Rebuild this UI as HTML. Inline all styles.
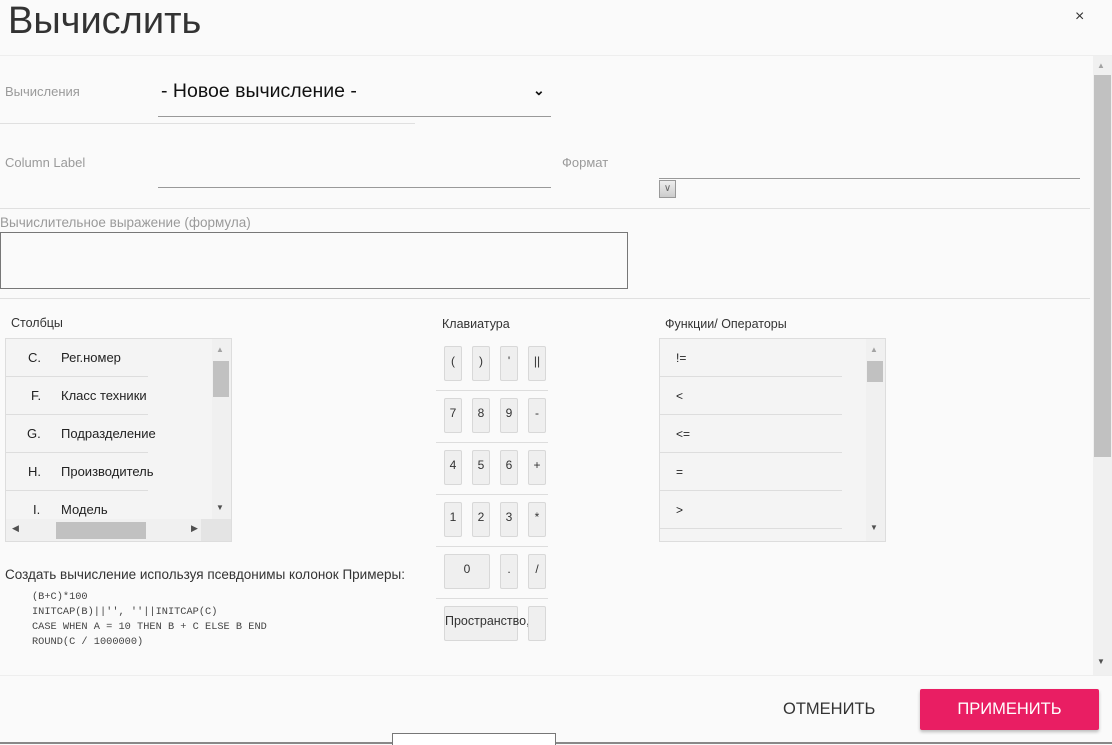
<!DOCTYPE html>
<html><head><meta charset="utf-8"><style>
body{margin:0;width:1112px;height:744px;background:#fafafa;font-family:"Liberation Sans",sans-serif;position:relative;overflow:hidden;color:#333}
.a{position:absolute}
.lbl{color:#9a9a9a;font-size:13px}
.hl{position:absolute;height:1px;background:#e0e0e0}
.k{position:absolute;width:16px;height:33px;background:#efefef;border:1px solid #d8d8d8;border-radius:2px;font-size:12px;text-align:center;line-height:28px;color:#333}
.ks{position:absolute;left:436px;width:112px;height:1px;background:#ddd}
.row{position:absolute;height:37px;border-bottom:1px solid #ddd;font-size:13px;color:#222}
.mono{font-family:"Liberation Mono",monospace;font-size:10.3px;color:#444;line-height:15px}
</style></head><body>
<div class="a" style="left:8px;top:-1px;font-size:38px;color:#333;line-height:44px">Вычислить</div>
<div class="a" style="left:1075px;top:8px;font-size:16px;color:#333">×</div>
<div class="hl" style="left:0;top:55px;width:1112px;background:#eee"></div>

<div class="a lbl" style="left:5px;top:84px">Вычисления</div>
<div class="a" style="left:161px;top:80px;font-size:19.5px;color:#111">- Новое вычисление -</div>
<div class="a" style="left:533px;top:82px;font-size:14px;color:#111;font-weight:bold">⌄</div>
<div class="hl" style="left:158px;top:116px;width:393px;background:#999"></div>
<div class="hl" style="left:0;top:123px;width:415px"></div>

<div class="a lbl" style="left:5px;top:155px">Column Label</div>
<div class="hl" style="left:158px;top:187px;width:393px;background:#999"></div>
<div class="a lbl" style="left:562px;top:155px">Формат</div>
<div class="hl" style="left:659px;top:178px;width:421px;background:#999"></div>
<div class="a" style="left:659px;top:180px;width:15px;height:16px;border:1px solid #999;background:linear-gradient(#eee,#ccc);font-size:10px;color:#666;text-align:center;line-height:16px">∨</div>
<div class="hl" style="left:0;top:208px;width:1090px"></div>

<div class="a lbl" style="left:0;top:215px;font-size:13.5px">Вычислительное выражение (формулa)</div>
<div class="a" style="left:0;top:232px;width:626px;height:55px;border:1px solid #777;background:#fafafa"></div>
<div class="hl" style="left:0;top:298px;width:1090px"></div>

<div class="a" style="left:11px;top:316px;font-size:12.5px">Столбцы</div>
<div class="a" style="left:5px;top:338px;width:225px;height:202px;border:1px solid #ddd;background:#f4f4f4;overflow:hidden">
 <div class="row" style="left:0;top:0;width:142px"><span class="a" style="left:22px;top:11px">C.</span><span class="a" style="left:55px;top:11px">Рег.номер</span></div>
 <div class="row" style="left:0;top:38px;width:142px"><span class="a" style="left:25px;top:11px">F.</span><span class="a" style="left:55px;top:11px;white-space:nowrap">Класс техники</span></div>
 <div class="row" style="left:0;top:76px;width:142px"><span class="a" style="left:21px;top:11px">G.</span><span class="a" style="left:55px;top:11px;white-space:nowrap">Подразделение</span></div>
 <div class="row" style="left:0;top:114px;width:142px"><span class="a" style="left:22px;top:11px">H.</span><span class="a" style="left:55px;top:11px;white-space:nowrap">Производитель</span></div>
 <div class="a" style="left:0;top:152px;width:142px;font-size:13px;color:#222"><span class="a" style="left:27px;top:11px">I.</span><span class="a" style="left:55px;top:11px">Модель</span></div>
 <div class="a" style="left:206px;top:0;width:19px;height:180px;background:#f0f0f0"></div>
 <div class="a" style="left:207px;top:22px;width:16px;height:36px;background:#c1c1c1"></div>
 <div class="a" style="left:210px;top:6px;font-size:8px;color:#a3a3a3">▲</div>
 <div class="a" style="left:210px;top:164px;font-size:8px;color:#505050">▼</div>
 <div class="a" style="left:0;top:180px;width:206px;height:22px;background:#f0f0f0"></div>
 <div class="a" style="left:50px;top:183px;width:90px;height:17px;background:#c1c1c1"></div>
 <div class="a" style="left:6px;top:184px;font-size:9px;color:#505050">◀</div>
 <div class="a" style="left:185px;top:184px;font-size:9px;color:#505050">▶</div>
 <div class="a" style="left:195px;top:180px;width:30px;height:22px;background:#e4e4e4"></div>
</div>

<div class="a" style="left:5px;top:567px;font-size:13.5px">Создать вычисление используя псевдонимы колонок Примеры:</div>
<div class="a mono" style="left:32px;top:590px;white-space:pre">(B+C)*100
INITCAP(B)||'', ''||INITCAP(C)
CASE WHEN A = 10 THEN B + C ELSE B END
ROUND(C / 1000000)</div>

<div class="a" style="left:442px;top:317px;font-size:12.5px">Клавиатура</div>
<div class="k" style="left:444px;top:346px">(</div><div class="k" style="left:472px;top:346px">)</div><div class="k" style="left:500px;top:346px">'</div><div class="k" style="left:528px;top:346px">||</div>
<div class="ks" style="top:390px"></div>
<div class="k" style="left:444px;top:398px">7</div><div class="k" style="left:472px;top:398px">8</div><div class="k" style="left:500px;top:398px">9</div><div class="k" style="left:528px;top:398px">-</div>
<div class="ks" style="top:442px"></div>
<div class="k" style="left:444px;top:450px">4</div><div class="k" style="left:472px;top:450px">5</div><div class="k" style="left:500px;top:450px">6</div><div class="k" style="left:528px;top:450px">+</div>
<div class="ks" style="top:494px"></div>
<div class="k" style="left:444px;top:502px">1</div><div class="k" style="left:472px;top:502px">2</div><div class="k" style="left:500px;top:502px">3</div><div class="k" style="left:528px;top:502px">*</div>
<div class="ks" style="top:546px"></div>
<div class="k" style="left:444px;top:554px;width:44px">0</div><div class="k" style="left:500px;top:554px">.</div><div class="k" style="left:528px;top:554px">/</div>
<div class="ks" style="top:598px"></div>
<div class="k" style="left:444px;top:606px;width:72px;white-space:nowrap;overflow:visible;font-size:12.5px">Пространство,</div><div class="k" style="left:528px;top:606px"></div>

<div class="a" style="left:665px;top:317px;font-size:12.5px">Функции/ Операторы</div>
<div class="a" style="left:659px;top:338px;width:225px;height:202px;border:1px solid #ddd;background:#f4f4f4;overflow:hidden">
 <div class="row" style="left:0;top:0;width:182px"><span class="a" style="left:16px;top:12px;font-size:12px">!=</span></div>
 <div class="row" style="left:0;top:38px;width:182px"><span class="a" style="left:16px;top:12px;font-size:12px">&lt;</span></div>
 <div class="row" style="left:0;top:76px;width:182px"><span class="a" style="left:16px;top:12px;font-size:12px">&lt;=</span></div>
 <div class="row" style="left:0;top:114px;width:182px"><span class="a" style="left:16px;top:12px;font-size:12px">=</span></div>
 <div class="row" style="left:0;top:152px;width:182px"><span class="a" style="left:16px;top:12px;font-size:12px">&gt;</span></div>
 <div class="a" style="left:206px;top:0;width:19px;height:202px;background:#f0f0f0"></div>
 <div class="a" style="left:207px;top:22px;width:16px;height:21px;background:#c1c1c1"></div>
 <div class="a" style="left:210px;top:6px;font-size:8px;color:#a3a3a3">▲</div>
 <div class="a" style="left:210px;top:184px;font-size:8px;color:#505050">▼</div>
</div>

<div class="a" style="left:1093px;top:56px;width:19px;height:619px;background:#f0f0f0"></div>
<div class="a" style="left:1094px;top:75px;width:17px;height:382px;background:#c1c1c1"></div>
<div class="a" style="left:1097px;top:61px;font-size:8px;color:#a3a3a3">▲</div>
<div class="a" style="left:1097px;top:657px;font-size:8px;color:#505050">▼</div>

<div class="hl" style="left:0;top:675px;width:1112px;background:#eee"></div>
<div class="a" style="left:783px;top:700px;font-size:16.5px;color:#333">ОТМЕНИТЬ</div>
<div class="a" style="left:920px;top:689px;width:179px;height:41px;background:#e91e63;border-radius:2px;box-shadow:0 2px 3px rgba(0,0,0,.25);color:#fff;font-size:16.5px;text-align:center;line-height:41px">ПРИМЕНИТЬ</div>
<div class="hl" style="left:0;top:742px;width:1112px;height:2px;background:#888"></div>
<div class="a" style="left:392px;top:733px;width:162px;height:11px;border:1px solid #777;border-bottom:none;background:#fff"></div>
</body></html>
